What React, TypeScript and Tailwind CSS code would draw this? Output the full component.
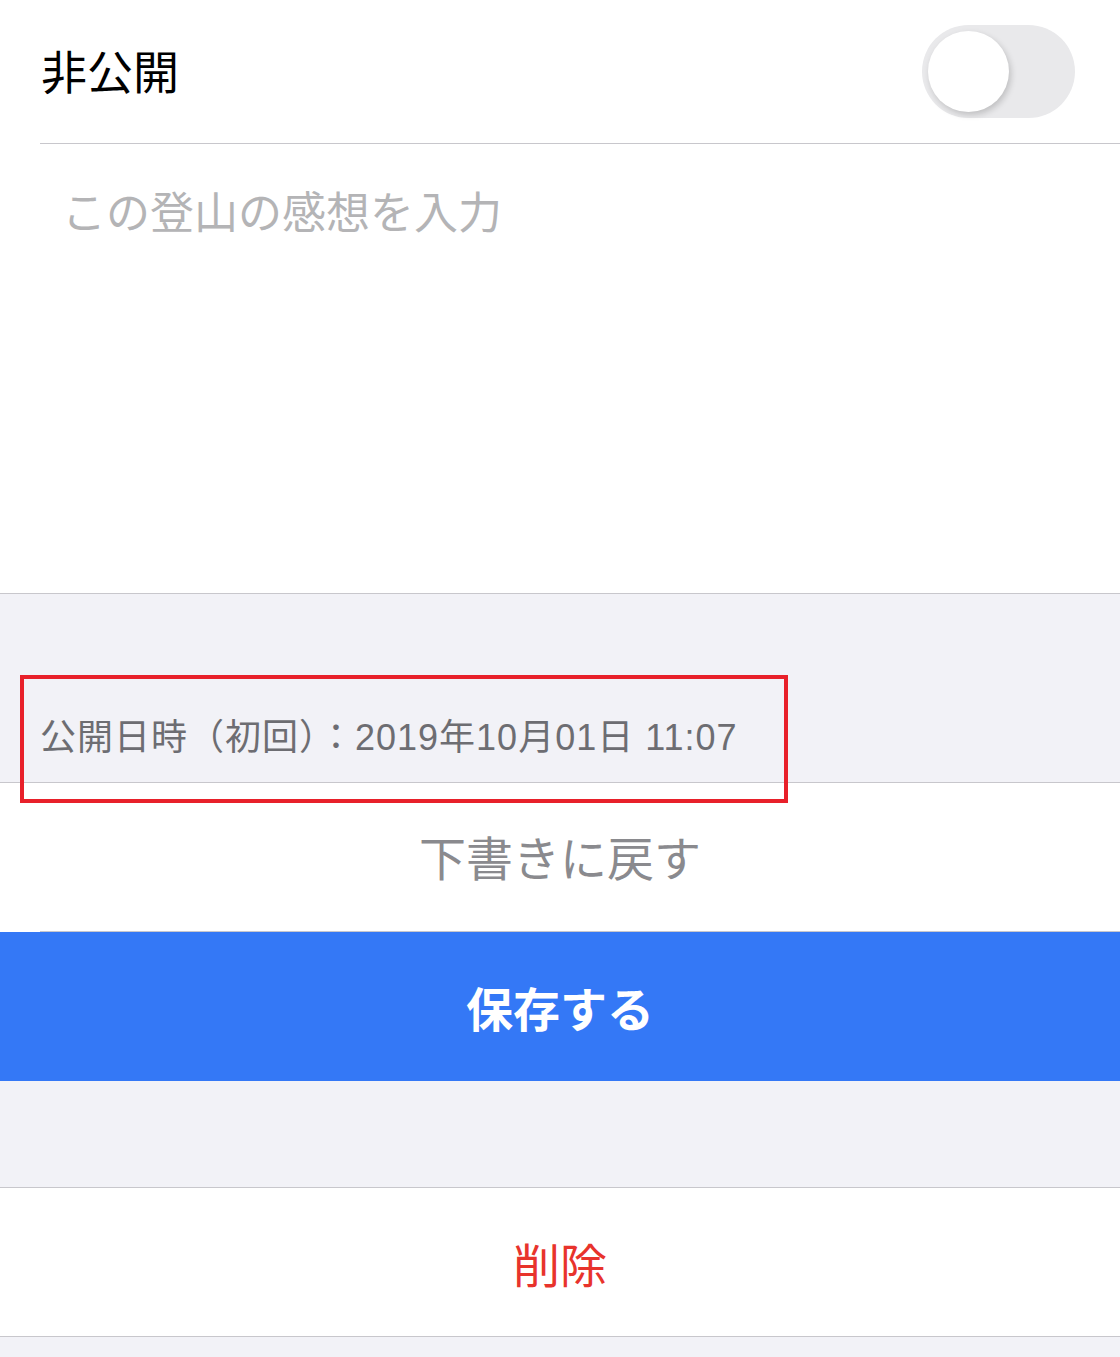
export default function App() {
  const font = { fontFamily: '"Noto Sans CJK JP", "Noto Sans", sans-serif' };

  return (
    <div className="relative min-h-screen w-[1120px] bg-[#f2f2f7]" style={font}>
      {/* Private toggle row */}
      <div className="bg-white">
        <div className="flex h-[143px] items-center justify-between pb-[6px] pl-[41px] pr-[45px]">
          <span className="text-[46px] font-normal leading-none text-black">非公開</span>
          <div className="mt-[6px] flex h-[93px] w-[153px] items-center rounded-full bg-[#e9e9eb] px-[6px]">
            <div className="h-[81px] w-[81px] rounded-full bg-white shadow-[2px_3px_6px_rgba(0,0,0,0.18)]" />
          </div>
        </div>
        <div className="ml-10 h-px bg-[#c8c7cc]" />

        {/* Impression text area */}
        <div className="h-[449px] pl-[62px] pt-[40px]">
          <p className="text-[44px] leading-[1.2] text-[#b4b4b6]">この登山の感想を入力</p>
        </div>
      </div>

      {/* Published date */}
      <div className="flex h-[189px] items-end border-t border-[#c8c7cc] pb-[26px] pl-10">
        <p
          className="text-[36px] leading-none tracking-[1px] text-[#6d6d72]"
          style={{ fontFamily: '"Liberation Sans", "Noto Sans CJK JP", sans-serif' }}
        >
          公開日時（初回）：2019年10月01日 11:07
        </p>
      </div>

      {/* Revert to draft */}
      <div className="border-t border-[#c8c7cc] bg-white">
        <div className="flex h-[148px] items-center justify-center pb-[4px]">
          <span className="text-[47px] leading-none text-[#8a8a8e]">下書きに戻す</span>
        </div>
        <div className="ml-10 h-px bg-[#c8c7cc]" />
      </div>

      {/* Save */}
      <button className="flex h-[149px] w-full items-center justify-center bg-[#3478f6]">
        <span className="text-[47px] font-bold leading-none text-white">保存する</span>
      </button>

      <div className="h-[106px]" />

      {/* Delete */}
      <div className="flex h-[150px] items-center justify-center border-y border-[#c8c7cc] bg-white">
        <span className="text-[47px] leading-none text-[#e8332c]">削除</span>
      </div>

      {/* Annotation box around the date */}
      <div className="absolute left-[20px] top-[675px] h-[128px] w-[768px] border-4 border-[#e8202a]" />
    </div>
  );
}
